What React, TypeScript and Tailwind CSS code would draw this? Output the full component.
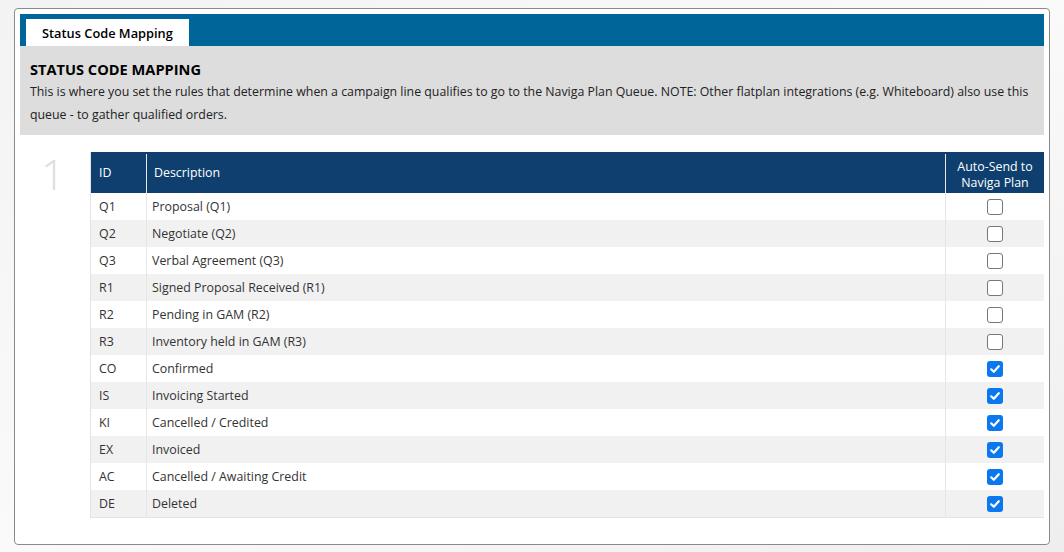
import React from "react";

const rows: [string, string, boolean][] = [
  ["Q1", "Proposal (Q1)", false],
  ["Q2", "Negotiate (Q2)", false],
  ["Q3", "Verbal Agreement (Q3)", false],
  ["R1", "Signed Proposal Received (R1)", false],
  ["R2", "Pending in GAM (R2)", false],
  ["R3", "Inventory held in GAM (R3)", false],
  ["CO", "Confirmed", true],
  ["IS", "Invoicing Started", true],
  ["KI", "Cancelled / Credited", true],
  ["EX", "Invoiced", true],
  ["AC", "Cancelled / Awaiting Credit", true],
  ["DE", "Deleted", true],
];

function Box({ checked }: { checked: boolean }) {
  if (checked) {
    return (
      <span className="flex h-[16px] w-[16px] items-center justify-center rounded-[3px] bg-[#0b78f0]">
        <svg width="12" height="12" viewBox="0 0 12 12">
          <path d="M2.2 6.3 L4.8 8.8 L9.8 3.2" fill="none" stroke="#fff" strokeWidth="2.2" strokeLinecap="round" strokeLinejoin="round" />
        </svg>
      </span>
    );
  }
  return <span className="block h-[16px] w-[16px] rounded-[3px] border-[1.5px] border-[#777] bg-white" />;
}

export default function App() {
  return (
    <div
      className="h-[552px] w-[1064px] bg-gradient-to-br from-[#f3f3f3] via-[#fafafa] to-[#eeeeee] pl-[14px] pt-[8px]"
      style={{ fontFamily: '"Open Sans", "Noto Sans", sans-serif' }}
    >
      <div className="h-[537px] w-[1036px] rounded-[4px] border border-[#8a8a8a] bg-white p-[5px]">
        <div className="h-[32px] bg-[#006699] pl-[6px] pt-[5px]">
          <div className="h-[27px] w-[163px] bg-white pl-[16px] text-[12.8px] font-semibold leading-[28px] text-black">
            Status Code Mapping
          </div>
        </div>
        <div className="h-[89px] bg-[#dddddd] px-[10px] pt-[12px]">
          <div className="text-[14.6px] font-bold leading-[22px] text-black">STATUS CODE MAPPING</div>
          <div className="text-[12.35px] leading-[23px] text-[#222]">
            This is where you set the rules that determine when a campaign line qualifies to go to the Naviga Plan Queue. NOTE: Other flatplan integrations (e.g. Whiteboard) also use this queue - to gather qualified orders.
          </div>
        </div>
        <div className="flex pt-[17px]">
          <div className="w-[70px] pl-[21px] pt-[0px] text-[42px] font-light leading-[44px] text-[#dddddd]">1</div>
          <div className="flex-1 border-b border-l border-[#e3e3e3] text-[12.4px] text-[#333]">
            <div className="flex h-[41px] bg-[#0e3f6e] pt-[2px] text-white">
              <div className="flex w-[56px] items-center border-r border-[#e8e8e8] pl-[8px]">ID</div>
              <div className="flex flex-1 items-center border-r border-[#e8e8e8] pl-[7px]">Description</div>
              <div className="flex w-[98px] items-center justify-center pt-[2px] text-center leading-[16px]">
                Auto-Send to
                <br />
                Naviga Plan
              </div>
            </div>
            {rows.map(([id, desc, checked], i) => (
              <div key={id} className={`flex h-[27px] ${i % 2 === 1 ? "bg-[#f1f1f1]" : "bg-white"}`}>
                <div className="flex w-[56px] items-center border-r border-[#e6e6e6] pl-[8px] pt-[2px]">{id}</div>
                <div className="flex flex-1 items-center border-r border-[#e6e6e6] pl-[5px] pt-[2px]">{desc}</div>
                <div className="flex w-[98px] items-center justify-center">
                  <Box checked={checked} />
                </div>
              </div>
            ))}
          </div>
        </div>
      </div>
    </div>
  );
}
